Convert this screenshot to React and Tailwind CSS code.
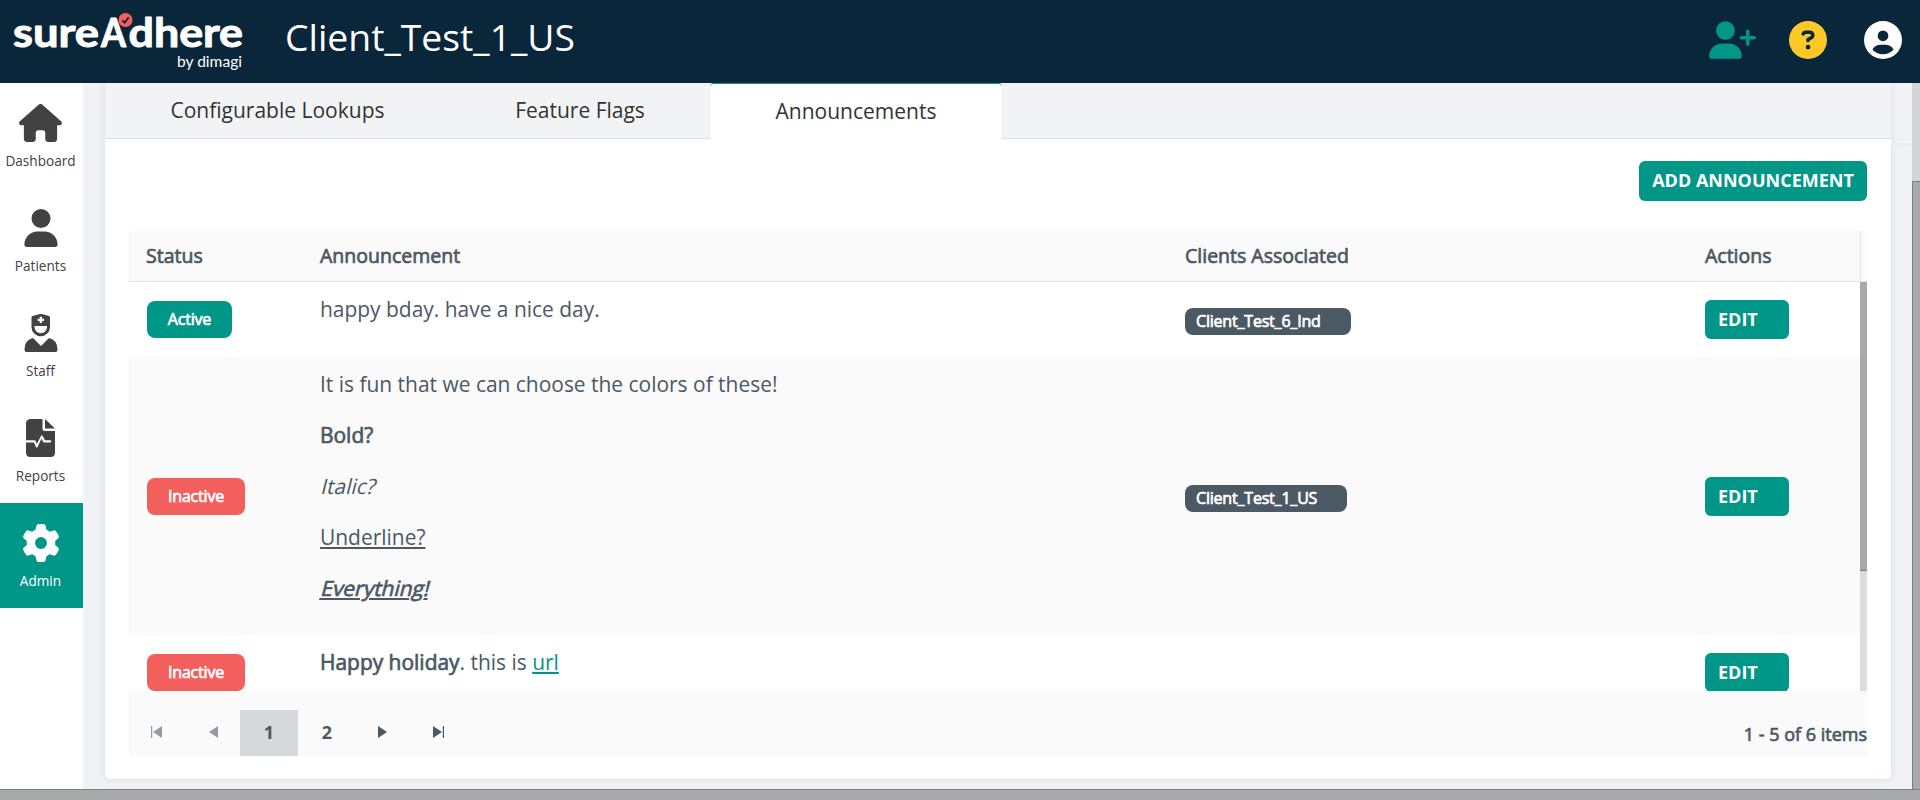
import { FaHouse, FaUser, FaUserPlus, FaCircleQuestion, FaCircleUser, FaGear } from "react-icons/fa6";

const faux = "[-webkit-text-stroke:0.7px_currentColor]";
const slant = "inline-block origin-[0_23px] skew-x-[-14deg]";

function NavItem({ label, active, children }) {
  return (
    <div className={`flex h-[105px] w-[83px] flex-col items-center ${active ? "bg-[#009688] text-white" : "text-[#424242]"}`}>
      <div className="flex h-[59px] w-full items-end justify-center pr-[2px]">{children}</div>
      <span className="mt-[8px] pr-[2px] text-[13.6px] leading-[22px]">{label}</span>
    </div>
  );
}

function Edit() {
  return (
    <button className="flex h-[39px] w-[84px] items-center rounded-[6px] bg-[#009688] pl-[13px] text-[18px] font-bold text-white">EDIT</button>
  );
}

function Status({ children, active }) {
  return (
    <span className={`flex h-[37px] items-center justify-center rounded-[8px] pb-px text-[16px] tracking-[-0.2px] text-white ${faux} ${active ? "w-[85px] bg-[#009688]" : "w-[98px] bg-[#f25f5c]"}`}>
      {children}
    </span>
  );
}

function Client({ children, wide }) {
  return (
    <span className={`mt-[4px] flex h-[27px] items-center rounded-[8px] bg-[#4b5964] pb-px pl-[11px] text-[16px] tracking-[-0.2px] text-white ${faux} ${wide ? "w-[166px]" : "w-[162px]"}`}>
      {children}
    </span>
  );
}

const cols = "grid grid-cols-[173px_866px_519px_173px]";

function Row({ shade, status, text, client, h }) {
  return (
    <div className={`${cols} ${h} shrink-0 items-center ${shade ? "bg-[#fafafa]" : "bg-white"}`}>
      <div className="pl-[18px]">{status}</div>
      <div className="h-full pl-[18px] pt-[12px] text-[20.95px] leading-[30px]">{text}</div>
      <div className="pl-[17px]">{client}</div>
      <div className="pl-[18px]"><Edit /></div>
    </div>
  );
}

export default function App() {
  return (
    <div className="flex h-[800px] w-[1920px] flex-col overflow-hidden bg-[#f0f2f5] font-['Open_Sans',sans-serif] text-[#4b5964]">
      <header className="relative z-10 flex h-[83px] shrink-0 items-start bg-[#0a263a] text-white">
        <svg className="shrink-0" width="250" height="83" viewBox="0 0 250 83">
          <g fill="#fff" stroke="#fff" strokeWidth="1" strokeLinejoin="round" fontFamily="Lato" fontWeight="700" fontSize="41">
            <text x="13" y="46.500" textLength="86" lengthAdjust="spacingAndGlyphs">sure</text>
            <text x="101" y="46.500" textLength="25" lengthAdjust="spacingAndGlyphs">A</text>
            <text x="128.500" y="46.500" textLength="114.500" lengthAdjust="spacingAndGlyphs">dhere</text>
          </g>
          <circle cx="125.500" cy="20" r="7" fill="#f25f5c" />
          <path d="M122.500 20.500l2.200 2.200 4-5.500" stroke="#0a263a" strokeWidth="1.800" fill="none" />
          <text x="177" y="66.500" fill="#fff" fontFamily="Lato" fontSize="15" textLength="65" lengthAdjust="spacingAndGlyphs">by dimagi</text>
        </svg>
        <h1 className="ml-[35px] mt-[10px] text-[37.300px] leading-[54px]">Client_Test_1_US</h1>
        <div className="ml-auto flex items-center pr-[18px] pt-[21px]">
          <FaUserPlus className="mr-[33px] h-[38px] w-[47px] text-[#009688]" />
          <FaCircleQuestion className="mr-[37px] size-[38px] text-[#ffc829]" />
          <FaCircleUser className="size-[38px]" />
        </div>
      </header>
      <div className="flex h-[706px] shrink-0">
        <nav className="w-[83px] shrink-0 bg-white">
          <NavItem label="Dashboard"><FaHouse className="h-[38px] w-[43px]" /></NavItem>
          <NavItem label="Patients"><FaUser className="size-[38px]" /></NavItem>
          <NavItem label="Staff">
            <svg width="34" height="38" viewBox="0 0 34 38" fill="currentColor">
              <path fillRule="evenodd" d="M7.500 3.500Q7.500 2.500 8.500 2L16 0Q17 -.2 18 0L25 2Q26 2.500 26 3.500V13A9.250 9.250 0 0 1 7.500 13ZM10.500 12V13A6.200 6.200 0 0 0 23 13V12ZM15.700 2.800V4.800H13.700V7H15.700V9H18V7H20V4.800H18V2.800Z" />
              <path d="M9 24L17 32L25 24Q33.500 26 33.500 35.500Q33.500 38 31.500 38H2.500Q.5 38 .5 35.500Q.5 26 9 24Z" />
            </svg>
          </NavItem>
          <NavItem label="Reports">
            <svg width="29" height="38" viewBox="0 0 29 38" fill="currentColor">
              <path d="M5 0H16.500V9.500Q16.500 12 19 12H29V33.500Q29 38 24.500 38H4.500Q0 38 0 33.500V23.500H8L10 28Q10.800 29.500 11.600 28L15.500 19.500L17 22.800Q17.400 23.600 18.500 23.600H24Q25.200 23.500 25.200 22.400Q25.200 21.200 24 21.200H19L16.600 16.800Q15.800 15.500 15 16.900L10.800 25L9.600 22Q9.200 21.200 8.300 21.200H0V4.500Q0 0 5 0Z" />
              <path d="M19 0L29 9.500H19Z" />
            </svg>
          </NavItem>
          <NavItem label="Admin" active><FaGear className="size-[38px]" /></NavItem>
        </nav>
        <main className="flex min-w-0 flex-1 pl-[22px]">
          <section className="h-[696px] w-[1786px] rounded-b-[5px] bg-white shadow-[0_0_6px_1px_#dde1e8]">
            <div className="flex h-[56px] border-b border-[#dcdfe2] bg-[#f1f3f5] text-[21px] text-[#333]">
              <div className="flex w-[344px] items-center justify-center pl-px pt-px">Configurable Lookups</div>
              <div className="flex w-[261px] items-center justify-center pl-px pt-px">Feature Flags</div>
              <div className="flex h-[56px] w-[292px] items-center justify-center rounded-t-[4px] border-t border-[#009688] bg-white pt-px">Announcements</div>
            </div>
            <div className="flex flex-col px-[24px]">
              <button className="mt-[22px] flex h-[40px] w-[228px] items-center justify-center self-end whitespace-nowrap rounded-[6px] bg-[#009688] pb-px text-[18px] font-bold text-white">ADD ANNOUNCEMENT</button>
              <div className="mt-[30px] flex h-[51px] border-b border-[#e3e4e5] bg-[#fafafa] text-[19.500px]">
                <div className={`${cols} ${faux} items-center border-r border-[#e3e4e5] pb-px`}>
                  <div className="pl-[17px]">Status</div>
                  <div className="pl-[18px]">Announcement</div>
                  <div className="pl-[17px]">Clients Associated</div>
                  <div className="pl-[18px]">Actions</div>
                </div>
              </div>
              <div className="flex h-[409px] overflow-hidden">
                <div className="flex w-[1731px] flex-col">
                  <Row h="h-[75px]" status={<Status active>Active</Status>} text={<p>happy bday. have a nice day.</p>} client={<Client wide>Client_Test_6_Ind</Client>} />
                  <Row h="h-[278px]" shade status={<Status>Inactive</Status>}
                    text={<div className="flex flex-col items-start gap-[21px]"><p>It is fun that we can choose the colors of these!</p><p className={faux}>Bold?</p><p className={slant}>Italic?</p><p className="underline">Underline?</p><p className={`underline ${slant} ${faux}`}>Everything!</p></div>}
                    client={<Client>Client_Test_1_US</Client>} />
                  <Row h="h-[75px]" status={<Status>Inactive</Status>} text={<p><span className={faux}>Happy holiday</span>. this is <a className="text-[#009688] underline">url</a></p>} />
                </div>
                <div className="w-[7px] bg-[#dcdcdc]"><div className="h-[289px] border-b border-[#708090] bg-[#a9a9a9]" /></div>
              </div>
              <div className="flex h-[65px] items-end bg-[#fafafa] text-[18px] font-bold">
                <div className="flex h-[46px] flex-1 items-center pb-[2px]">
                  <svg className="ml-[22px] w-[11px]" height="12" viewBox="0 0 11 12" fill="#939ba1"><path d="M0 0H1.200V12H0ZM11 0V12L2 6Z" /></svg>
                  <svg className="ml-[47px] w-[9px]" height="12" viewBox="0 0 9 12" fill="#939ba1"><path d="M9 0V12L0 6Z" /></svg>
                  <span className="-mb-[2px] ml-[22px] flex h-[46px] w-[58px] items-center justify-center bg-[#d5d9dc] pb-[2px]">1</span>
                  <span className="flex w-[58px] justify-center">2</span>
                  <svg className="ml-[22px] w-[9px]" height="12" viewBox="0 0 9 12" fill="#4b5964"><path d="M0 0V12L9 6Z" /></svg>
                  <svg className="ml-[46px] w-[11px]" height="12" viewBox="0 0 11 12" fill="#4b5964"><path d="M0 0V12L9 6ZM9.800 0H11V12H9.800Z" /></svg>
                </div>
                <span className={`pb-[9px] font-normal leading-[26px] ${faux}`}>1 - 5 of 6 items</span>
              </div>
            </div>
          </section>
          <div className="flex flex-1 flex-col">
            <div className="mt-[60px] h-[3px] bg-[#ebedee]" />
          </div>
          <div className="flex h-[706px] w-[8px] flex-col bg-[#d3d4d6]">
            <div className="mt-[98px] flex-1 border-l border-t border-[#708090] bg-[#a9a9a9]" />
          </div>
        </main>
      </div>
      <div className="h-[11px] shrink-0 border-t border-[#708090] bg-[#a9a9a9]" />
    </div>
  );
}
